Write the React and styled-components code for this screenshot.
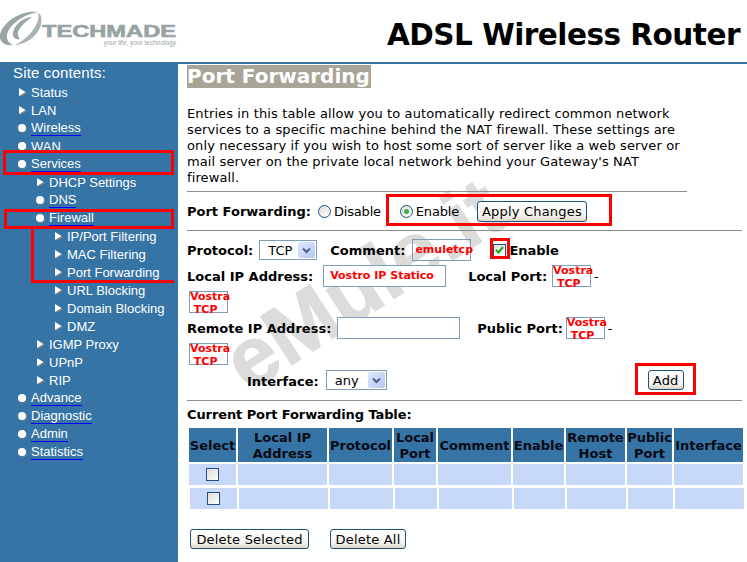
import React from "react";
import styled, { createGlobalStyle } from "styled-components";

const Global = createGlobalStyle`
  html, body { margin: 0; padding: 0; background: #fff; }
  body { font-family: "DejaVu Sans", Verdana, sans-serif; font-size: 13px; color: #000; }
`;

const Page = styled.div`
  position: relative;
  width: 747px;
  height: 562px;
  overflow: hidden;
  background: #fff;
`;
const Header = styled.header`
  display: flex;
  justify-content: space-between;
  align-items: flex-start;
  height: 62px;
  padding-right: 7px;
  box-sizing: border-box;
`;
const Title = styled.h1`
  margin: 17px 0 0;
  font: bold 29.5px/36px "DejaVu Sans", sans-serif;
  letter-spacing: -0.5px;
  white-space: nowrap;
`;
const Body = styled.div`
  display: flex;
  height: 500px;
`;
const Side = styled.nav`
  width: 178px;
  flex: none;
  background: #3674a5;
  padding-top: 3px;
  box-sizing: border-box;
  font-family: "Liberation Sans", Arial, sans-serif;
  color: #fff;
`;
const SideTitle = styled.div`
  font-size: 15px;
  letter-spacing: 0.15px;
  line-height: 16px;
  padding-left: 13px;
  height: 18px;
`;
const Item = styled.div`
  display: flex;
  align-items: center;
  height: 18px;
  padding-left: ${(p) => 18 + p.$level * 18}px;
  font-size: 13px;
`;
const Mark = styled.span`
  width: 13px;
  flex: none;
  display: flex;
  align-items: center;
`;
const Label = styled.span`
  ${(p) => p.$link && "border-bottom: 1px solid #0000ff; line-height: 14px; padding-top: 1px;"}
`;
const Ball = styled.i`
  display: block;
  width: 8px;
  height: 8px;
  border-radius: 50%;
  background: #fff;
  box-shadow: 1px 1px 1px #6d7f8d;
`;
const Main = styled.main`
  position: relative;
  z-index: 1;
  flex: 1;
  min-width: 0;
  padding-left: 9px;
`;
const TopRule = styled.div`
  position: absolute;
  left: 0;
  right: 0;
  top: 62px;
  height: 2px;
  background: #3674a5;
`;
const Heading = styled.h2`
  display: block;
  margin: 3px 0 0;
  padding: 0;
  width: 184px;
  height: 23px;
  box-sizing: border-box;
  background: #a8a498;
  color: #fff;
  font: bold 20px/23px "DejaVu Sans", sans-serif;
  white-space: nowrap;
`;
const Intro = styled.p`
  margin: 17px 0 0;
  padding-top: 1px;
  box-sizing: border-box;
  font-size: 13px;
  letter-spacing: 0.12px;
  line-height: 16px;
  height: 80px;
  white-space: nowrap;
`;
const Rule = styled.hr`
  margin: ${(p) => p.$top}px 0 0;
  border: 0;
  height: 1px;
  width: ${(p) => p.$w}px;
  background: #8c8c8c;
`;
const Row = styled.div`
  display: flex;
  align-items: center;
  box-sizing: border-box;
  height: ${(p) => p.$h}px;
  margin-top: ${(p) => p.$top || 0}px;
  padding-top: ${(p) => p.$pt || 0}px;
  white-space: nowrap;
`;
const Strong = styled.span`
  font-weight: bold;
  font-size: 13px;
  position: relative;
  top: ${(p) => p.$dy || 0}px;
  margin-left: ${(p) => p.$ml || 0}px;
`;
const Plain = styled.span`
  font-size: 13px;
  letter-spacing: ${(p) => p.$ls || 0}px;
  margin-left: ${(p) => p.$ml || 0}px;
`;
const Radio = styled.span`
  display: inline-block;
  position: relative;
  box-sizing: border-box;
  width: 13px;
  height: 13px;
  border-radius: 50%;
  border: 1px solid #1c5180;
  background: linear-gradient(135deg, #dcdcd7, #fff);
  margin-left: ${(p) => p.$ml}px;
  margin-right: 3px;
  &::after {
    content: "";
    display: ${(p) => (p.$on ? "block" : "none")};
    position: absolute;
    left: 3px;
    top: 3px;
    width: 5px;
    height: 5px;
    border-radius: 50%;
    background: #3fae49;
  }
`;
const Button = styled.button`
  box-sizing: border-box;
  width: ${(p) => p.$w}px;
  height: ${(p) => p.$h || 20}px;
  margin-left: ${(p) => p.$ml || 0}px;
  padding: 0;
  border: 1px solid #1c5180;
  border-radius: 3px;
  background: linear-gradient(#fff, #f4f3ee 70%, #dcd8c8);
  color: #000;
  font: 13px "DejaVu Sans", sans-serif;
  letter-spacing: 0.2px;
`;
const Select = styled.span`
  display: inline-flex;
  align-items: center;
  justify-content: space-between;
  box-sizing: border-box;
  width: ${(p) => p.$w}px;
  height: 20px;
  margin-left: ${(p) => p.$ml}px;
  padding: 1px 1px 1px 8px;
  border: 1px solid #7f9db9;
  background: #fff;
  font-size: 13px;
`;
const Arrow = styled.span`
  display: flex;
  align-items: center;
  justify-content: center;
  width: 17px;
  height: 16px;
  border-radius: 2px;
  background: linear-gradient(135deg, #dfe8fb, #b4c8f4);
`;
const Field = styled.span`
  display: inline-block;
  box-sizing: border-box;
  width: ${(p) => p.$w}px;
  height: 22px;
  margin-left: ${(p) => p.$ml || 0}px;
  padding-left: ${(p) => p.$pad || 0}px;
  border: 1px solid #7f9db9;
  background: ${(p) => (p.$clear ? "transparent" : "#fff")};
  color: #f00;
  font: bold 11px/20px "DejaVu Sans", sans-serif;
`;
const PortBox = styled.span`
  display: block;
  flex: none;
  box-sizing: border-box;
  width: 39px;
  height: 22px;
  margin-left: ${(p) => p.$ml || 0}px;
  border: 1px solid #7f9db9;
  background: transparent;
  color: #f00;
  font: bold 11px/13px "DejaVu Sans", sans-serif;
  white-space: pre;
  & > span { display: block; margin-top: -2px; }
`;
const Check = styled.span`
  display: inline-flex;
  align-items: center;
  justify-content: center;
  box-sizing: border-box;
  flex: none;
  width: 13px;
  height: 13px;
  margin-left: ${(p) => p.$ml || 0}px;
  border: 1px solid #1c5180;
  background: linear-gradient(135deg, #dcdcd7, #fff);
`;
const TableTitle = styled.div`
  height: 27px;
  line-height: 27px;
  font-weight: bold;
  font-size: 13px;
  letter-spacing: -0.1px;
`;
const Grid = styled.div`
  display: grid;
  grid-template-columns: 47px 89px 63px 42px 73px 51px 59px 45px 69px;
  column-gap: 2px;
  margin: ${(p) => p.$top || 0}px 0 0 ${(p) => p.$left}px;
  height: ${(p) => p.$h}px;
  width: max-content;
`;
const Head = styled.div`
  display: flex;
  align-items: center;
  justify-content: center;
  text-align: center;
  box-sizing: border-box;
  padding-top: 2px;
  background: #3674a5;
  font-weight: bold;
  font-size: 13px;
  line-height: 16px;
  color: #0a0a14;
  white-space: pre;
`;
const Cell = styled.div`
  display: flex;
  align-items: center;
  justify-content: center;
  background: #c7d8f8;
`;
const Actions = styled.div`
  display: flex;
  margin: 20px 0 0 3px;
`;
const Watermark = styled.div`
  position: absolute;
  left: 207px;
  top: 240px;
  transform: rotate(-33deg);
  transform-origin: 50% 50%;
  font: bold 84px/88px "Liberation Sans", Arial, sans-serif;
  -webkit-text-stroke: 1px #dcdcdc;
  color: #dcdcdc;
  white-space: nowrap;
  z-index: 0;
`;
const Marker = styled.div`
  position: absolute;
  z-index: 3;
  box-sizing: border-box;
  left: ${(p) => p.$x}px;
  top: ${(p) => p.$y}px;
  width: ${(p) => p.$w}px;
  height: ${(p) => p.$h}px;
  border: ${(p) => p.$b || 3}px solid #f00;
  ${(p) => p.$open && "border-top: 0; border-right: 0;"}
`;

const Tri = () => (
  <svg width="9" height="11" viewBox="0 0 9 11">
    <path d="M2 2 L9 6 L2 10 Z" fill="#7d8790" />
    <path d="M1 1 L7.5 5 L1 9 Z" fill="#fff" />
  </svg>
);
const Down = () => (
  <svg width="9" height="7" viewBox="0 0 9 7">
    <path d="M1 1.5 L4.5 5 L8 1.5" fill="none" stroke="#4d6185" strokeWidth="2" />
  </svg>
);
const Tick = () => (
  <svg width="9" height="8" viewBox="0 0 9 8">
    <path d="M1 4 L3.5 6.5 L8 1" fill="none" stroke="#21a121" strokeWidth="2" />
  </svg>
);
const Logo = () => (
  <svg width="178" height="48" viewBox="0 0 178 48" style={{ display: "block" }}>
    <path d="M38 12 C22 10 3 21 0 35 C-1 42 5 46 13 45 C6 42 5 35 10 28 C16 20 27 14 38 12 Z" fill="#9aa5a8" />
    <path d="M32 17 C24 17 15 24 13 32 C12 37 15 40 20 39 C17 36 17 31 21 27 C25 22 29 19 32 17 Z" fill="#9aa5a8" />
    <path d="M38 13 C41 22 30 38 15 45 C30 44 44 30 41 17 C41 15 40 14 38 13 Z" fill="#a9b3b5" />
    <text x="42" y="37" fontFamily="Liberation Sans" fontWeight="bold" fontSize="16.5" fill="#98a3a6" stroke="#98a3a6" strokeWidth="0.6" textLength="134" lengthAdjust="spacingAndGlyphs">TECHMADE</text>
    <text x="176" y="45" textAnchor="end" fontFamily="Liberation Sans" fontSize="6.5" fill="#9aa5a8">your life, your technology</text>
  </svg>
);

const nav = [
  ["Status", 0, "t"], ["LAN", 0, "t"], ["Wireless", 0, "b", 1], ["WAN", 0, "b"], ["Services", 0, "b", 1],
  ["DHCP Settings", 1, "t"], ["DNS", 1, "b", 1], ["Firewall", 1, "b", 1],
  ["IP/Port Filtering", 2, "t"], ["MAC Filtering", 2, "t"], ["Port Forwarding", 2, "t"], ["URL Blocking", 2, "t"],
  ["Domain Blocking", 2, "t"], ["DMZ", 2, "t"], ["IGMP Proxy", 1, "t"], ["UPnP", 1, "t"], ["RIP", 1, "t"],
  ["Advance", 0, "b", 1], ["Diagnostic", 0, "b", 1], ["Admin", 0, "b", 1], ["Statistics", 0, "b", 1],
];
const heads = ["Select", "Local IP\nAddress", "Protocol", "Local\nPort", "Comment", "Enable", "Remote\nHost", "Public\nPort", "Interface"];

const BodyRow = ({ left, top }) => (
  <Grid $left={left} $top={top} $h={21}>
    {heads.map((h, i) => (
      <Cell key={h}>{i === 0 && <Check />}</Cell>
    ))}
  </Grid>
);
const Port = ({ ml }) => (
  <PortBox $ml={ml}>
    <span>{"Vostra\n TCP"}</span>
  </PortBox>
);

export default function App() {
  return (
    <Page>
      <Global />
      <Header>
        <Logo />
        <Title>ADSL Wireless Router</Title>
      </Header>
      <TopRule />
      <Watermark>eMule.it</Watermark>
      <Body>
        <Side>
          <SideTitle>Site contents:</SideTitle>
          {nav.map(([t, l, k, link]) => (
            <Item key={t} $level={l}>
              <Mark>{k === "t" ? <Tri /> : <Ball />}</Mark>
              <Label $link={link}>{t}</Label>
            </Item>
          ))}
        </Side>
        <Main>
          <Heading>Port Forwarding</Heading>
          <Intro>
            Entries in this table allow you to automatically redirect common network
            <br />
            services to a specific machine behind the NAT firewall. These settings are
            <br />
            only necessary if you wish to host some sort of server like a web server or
            <br />
            mail server on the private local network behind your Gateway's NAT
            <br />
            firewall.
          </Intro>
          <Rule $top={6} $w={500} />
          <Row $h={38}>
            <Strong>Port Forwarding:</Strong>
            <Radio $ml={7} />
            <Plain $ls={-0.2}>Disable</Plain>
            <Radio $ml={19} $on />
            <Plain $ls={-0.2}>Enable</Plain>
            <Button $w={110} $h={21} $ml={18}>Apply Changes</Button>
          </Row>
          <Rule $top={0} $w={555} />
          <Row $h={34} $pt={4}>
            <Strong>Protocol:</Strong>
            <Select $w={58} $ml={6}>TCP<Arrow><Down /></Arrow></Select>
            <Strong $ml={13}>Comment:</Strong>
            <Field $w={59} $ml={7} $pad={2} $clear>emuletcp</Field>
            <Check $ml={22}><Tick /></Check>
            <Strong $ml={3}>Enable</Strong>
          </Row>
          <Row $h={22}>
            <Strong>Local IP Address:</Strong>
            <Field $w={123} $ml={10} $pad={6}>Vostro IP Statico</Field>
            <Strong $ml={22}>Local Port:</Strong>
            <Port ml={5} />
            <Plain $ml={3}>-</Plain>
          </Row>
          <Row $h={22} $top={4}>
            <Port ml={2} />
          </Row>
          <Row $h={22} $top={4}>
            <Strong>Remote IP Address:</Strong>
            <Field $w={123} $ml={6} />
            <Strong $ml={17}>Public Port:</Strong>
            <Port ml={3} />
            <Plain $ml={3}>-</Plain>
          </Row>
          <Row $h={22} $top={4}>
            <Port ml={2} />
          </Row>
          <Row $h={20} $top={5}>
            <Strong $ml={60} $dy={1}>Interface:</Strong>
            <Select $w={61} $ml={7}>any<Arrow><Down /></Arrow></Select>
            <Button $w={36} $ml={261}>Add</Button>
          </Row>
          <Rule $top={10} $w={555} />
          <TableTitle>Current Port Forwarding Table:</TableTitle>
          <Grid $left={2} $h={34}>
            {heads.map((h) => (
              <Head key={h}>{h}</Head>
            ))}
          </Grid>
          <BodyRow left={2} top={2} />
          <BodyRow left={3} top={3} />
          <Actions>
            <Button $w={119}>Delete Selected</Button>
            <Button $w={76} $ml={21}>Delete All</Button>
          </Actions>
        </Main>
      </Body>
      <Marker $x={3} $y={150} $w={171} $h={25} />
      <Marker $x={4} $y={209} $w={170} $h={20} />
      <Marker $x={31} $y={229} $w={143} $h={54} $open />
      <Marker $x={386} $y={194} $w={226} $h={32} />
      <Marker $x={490} $y={238} $w={20} $h={21} />
      <Marker $x={635} $y={363} $w={61} $h={32} />
    </Page>
  );
}
